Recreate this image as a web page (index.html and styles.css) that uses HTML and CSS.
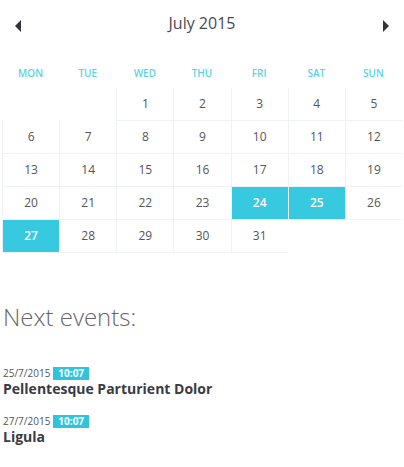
FILE: index.html
```html
<!DOCTYPE html>
<html lang="en">
<head>
<meta charset="utf-8">
<title>Calendar</title>
<link rel="stylesheet" href="styles.css">
</head>
<body>
<div class="calendar">
  <div class="cal-header">
    <span class="arrow arrow-left"></span>
    <span class="cal-title">July 2015</span>
    <span class="arrow arrow-right"></span>
  </div>
  <div class="weekdays">
    <span>Mon</span><span>Tue</span><span>Wed</span><span>Thu</span><span>Fri</span><span>Sat</span><span>Sun</span>
  </div>
  <div class="days">
    <span class="empty"></span><span class="empty"></span>
    <span class="day">1</span><span class="day">2</span><span class="day">3</span><span class="day">4</span><span class="day">5</span>
    <span class="day">6</span><span class="day">7</span><span class="day">8</span><span class="day">9</span><span class="day">10</span><span class="day">11</span><span class="day">12</span>
    <span class="day">13</span><span class="day">14</span><span class="day">15</span><span class="day">16</span><span class="day">17</span><span class="day">18</span><span class="day">19</span>
    <span class="day">20</span><span class="day">21</span><span class="day">22</span><span class="day">23</span><span class="day event-day">24</span><span class="day event-day">25</span><span class="day">26</span>
    <span class="day event-day">27</span><span class="day">28</span><span class="day">29</span><span class="day">30</span><span class="day">31</span>
  </div>
</div>
<div class="events">
  <h2 class="events-title">Next events:</h2>
  <div class="event">
    <div class="event-meta"><span class="event-date">25/7/2015</span><span class="event-time">10:07</span></div>
    <div class="event-name">Pellentesque Parturient Dolor</div>
  </div>
  <div class="event">
    <div class="event-meta"><span class="event-date">27/7/2015</span><span class="event-time">10:07</span></div>
    <div class="event-name">Ligula</div>
  </div>
</div>
</body>
</html>
```
FILE: styles.css
```css
html, body {
  margin: 0;
  padding: 0;
  background: #ffffff;
}
body {
  font-family: "Open Sans", "Liberation Sans", sans-serif;
  color: #555555;
}
.calendar {
  padding-left: 2px;
  width: 400px;
}
.cal-header {
  height: 47px;
  display: flex;
  align-items: center;
  justify-content: space-between;
  padding: 0 13px 0 13px;
}
.cal-title {
  font-size: 16px;
  line-height: 47px;
  color: #4a4a52;
}
.arrow {
  width: 0;
  height: 0;
  border-top: 6px solid transparent;
  border-bottom: 6px solid transparent;
  margin-top: 4px;
}
.arrow-left {
  border-right: 6px solid #33333b;
}
.arrow-right {
  border-left: 6px solid #33333b;
}
.weekdays {
  margin-top: 11px;
  display: grid;
  grid-template-columns: repeat(7, 1fr);
  height: 30px;
}
.weekdays span {
  text-align: center;
  text-transform: uppercase;
  font-size: 10px;
  line-height: 30px;
  font-weight: 600;
  color: #5ad3e5;
}
.days {
  display: grid;
  grid-template-columns: repeat(7, 1fr);
}
.days span {
  box-sizing: border-box;
  height: 33px;
  font-size: 12px;
  line-height: 32px;
  text-align: center;
}
.day {
  border-left: 1px solid #eef2f5;
  border-bottom: 1px solid #eef2f5;
  color: #555558;
}
.event-day {
  background: #36c9df;
  background-clip: padding-box;
  color: #ffffff;
  font-weight: 600;
}
.events {
  padding-left: 3px;
  margin-top: 48px;
}
.events-title {
  margin: 0;
  font-size: 24px;
  line-height: 32px;
  font-weight: 300;
  color: #666666;
}
.event {
  margin-top: 33px;
}
.event + .event {
  margin-top: 16px;
}
.event-meta {
  display: flex;
  align-items: center;
  height: 14px;
}
.event-date {
  font-size: 10px;
  line-height: 13px;
  color: #555555;
}
.event-time {
  margin-left: 3px;
  padding: 0 5px;
  height: 13px;
  font-size: 10px;
  line-height: 13px;
  font-weight: 700;
  color: #ffffff;
  background: #2fc4dc;
}
.event-name {
  font-size: 14px;
  line-height: 18px;
  font-weight: 700;
  color: #3a3a44;
}
```
